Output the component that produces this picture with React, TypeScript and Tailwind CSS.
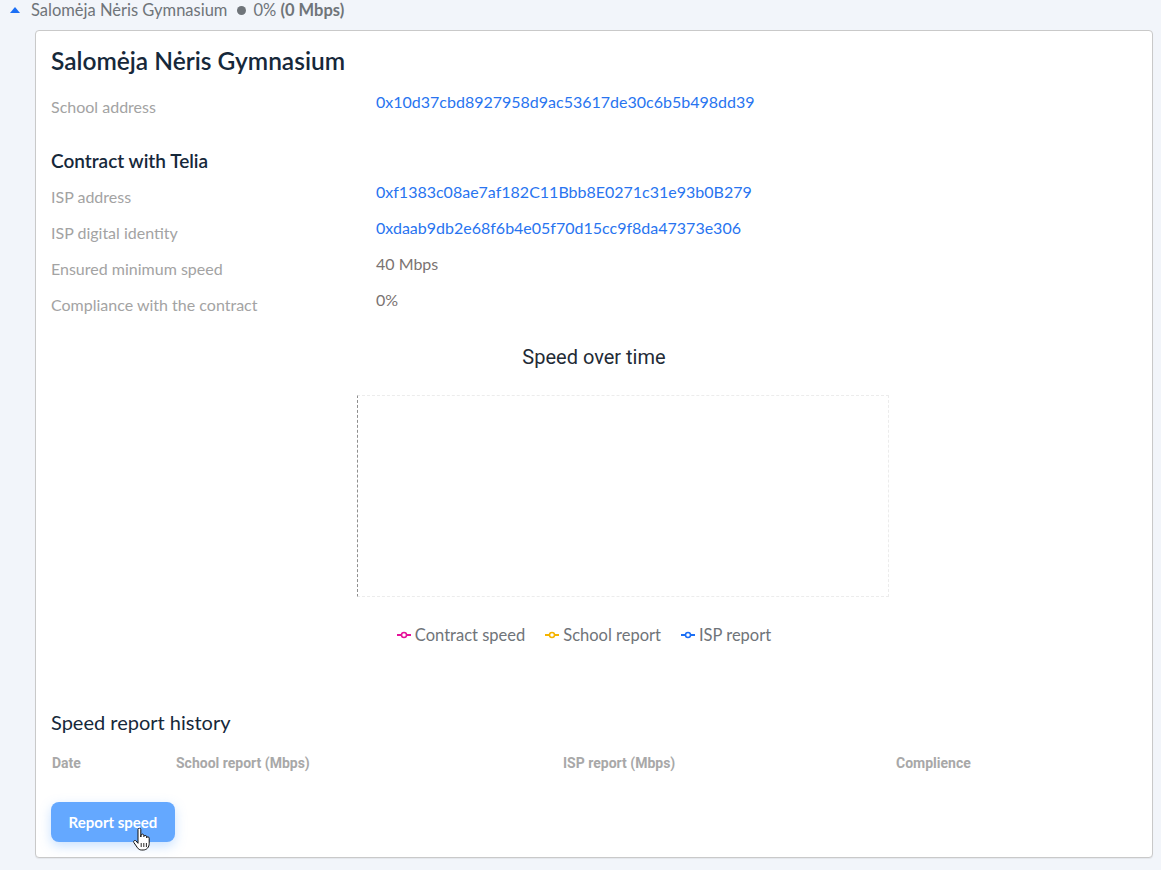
import React from "react";

const rows = [
  { label: "ISP address", value: "0xf1383c08ae7af182C11Bbb8E0271c31e93b0B279", link: true },
  { label: "ISP digital identity", value: "0xdaab9db2e68f6b4e05f70d15cc9f8da47373e306", link: true },
  { label: "Ensured minimum speed", value: "40 Mbps", link: false },
  { label: "Compliance with the contract", value: "0%", link: false },
];

const legend = [
  { name: "Contract speed", color: "#e5129a" },
  { name: "School report", color: "#f5b400" },
  { name: "ISP report", color: "#1c6ff5" },
];

function LegendMark({ color }: { color: string }) {
  return (
    <svg width="14" height="8" viewBox="0 0 14 8" className="mr-[4px]">
      <line x1="0" y1="4" x2="14" y2="4" stroke={color} strokeWidth="2" />
      <circle cx="7" cy="4" r="2.5" fill="#fff" stroke={color} strokeWidth="1.5" />
    </svg>
  );
}

function Row({ label, value, link }: { label: string; value: string; link: boolean }) {
  return (
    <div className="flex h-[36px]">
      <div className="w-[325px] pt-[8px] text-[16px] text-[#a3a3a3]">{label}</div>
      <div className={`pt-[3px] text-[16px] ${link ? "text-[#2874f0]" : "text-[#7a7371]"}`}>{value}</div>
    </div>
  );
}

export default function App() {
  return (
    <div className="min-h-screen w-full bg-[#f2f5fa] pl-[9px] pr-[8px] font-['Lato','Open_Sans',sans-serif]">
      <div className="flex h-[20px] items-center text-[16.5px] text-[#6f7479]">
        <svg width="10" height="6" viewBox="0 0 10 6" className="ml-[1px] mr-[11px]">
          <polygon points="5,0 10,6 0,6" fill="#1c6ff5" />
        </svg>
        <span>Salomėja Nėris Gymnasium</span>
        <span className="ml-[10px] mr-[7px] inline-block h-[9px] w-[9px] rounded-full bg-[#6f7479]" />
        <span>0% <span className="font-bold">(0 Mbps)</span></span>
      </div>

      <div className="ml-[26px] mt-[10px] h-[828px] rounded-[4px] border border-[#c9c9c9] bg-white px-[15px] pt-[15px] shadow-[0_1px_1px_rgba(0,0,0,0.06)]">
        <h1 className="text-[24.5px] leading-[30px] font-semibold text-[#16283a]">Salomėja Nėris Gymnasium</h1>
        <div className="mt-[11px]">
          <Row label="School address" value="0x10d37cbd8927958d9ac53617de30c6b5b498dd39" link />
        </div>
        <h2 className="mt-[24px] h-[30px] text-[19px] font-semibold text-[#16283a]">Contract with Telia</h2>
        <div>
          {rows.map((r) => (
            <Row key={r.label} {...r} />
          ))}
        </div>

        <div className="mt-[21px] flex flex-col items-center">
          <div className="font-['Roboto',sans-serif] text-[20px] text-[#1f2b36]">Speed over time</div>
          <div className="ml-[58px] mt-[23px] h-[202px] w-[532px] border border-dashed border-[#ececec] border-l-[#8f8f8f]" />
          <div className="ml-[-20px] mt-[26px] flex items-center gap-[20px] text-[16.5px] text-[#6f7479]">
            {legend.map((l) => (
              <div key={l.name} className="flex items-center">
                <LegendMark color={l.color} />
                <span>{l.name}</span>
              </div>
            ))}
          </div>
        </div>

        <h3 className="mt-[59px] text-[20px] text-[#16283a]">Speed report history</h3>
        <div className="mt-[16px] grid grid-cols-[124px_387px_333px_1fr] pl-[1px] font-['Roboto',sans-serif] text-[14px] font-bold text-[#a8a8a8]">
          <div>Date</div>
          <div>School report (Mbps)</div>
          <div>ISP report (Mbps)</div>
          <div>Complience</div>
        </div>

        <div className="relative mt-[28px] w-fit">
          <button className="h-[40px] w-[124px] rounded-[8px] bg-[#64a8ff] text-[15px] font-bold text-white shadow-[0_4px_12px_rgba(100,168,255,0.35)]">
            Report speed
          </button>
          <svg width="18" height="24" viewBox="0 0 18 24" className="absolute left-[82px] top-[26px]">
            <path
              d="M5 1.5c0-.8.6-1.4 1.4-1.4S7.8.7 7.8 1.5V9l.2-1.6c.1-.8.7-1.3 1.4-1.3.8 0 1.4.6 1.4 1.4v1.1c.1-.7.7-1.2 1.4-1.2.8 0 1.4.6 1.4 1.4v1c.1-.6.6-1 1.3-1 .8 0 1.3.6 1.3 1.4v5.3c0 3.5-2.4 6.5-6 6.5H8.6c-1.8 0-3.1-.8-4.1-2.2L.9 14.6c-.5-.7-.3-1.5.3-1.9.6-.4 1.4-.3 1.9.3L5 15.3V1.5z"
              fill="#fff"
              stroke="#111"
              strokeWidth="1"
            />
            <line x1="8.2" y1="15" x2="8.2" y2="19" stroke="#111" strokeWidth="0.9" />
            <line x1="10.8" y1="15" x2="10.8" y2="19" stroke="#111" strokeWidth="0.9" />
            <line x1="13.4" y1="15" x2="13.4" y2="19" stroke="#111" strokeWidth="0.9" />
          </svg>
        </div>
      </div>
    </div>
  );
}
